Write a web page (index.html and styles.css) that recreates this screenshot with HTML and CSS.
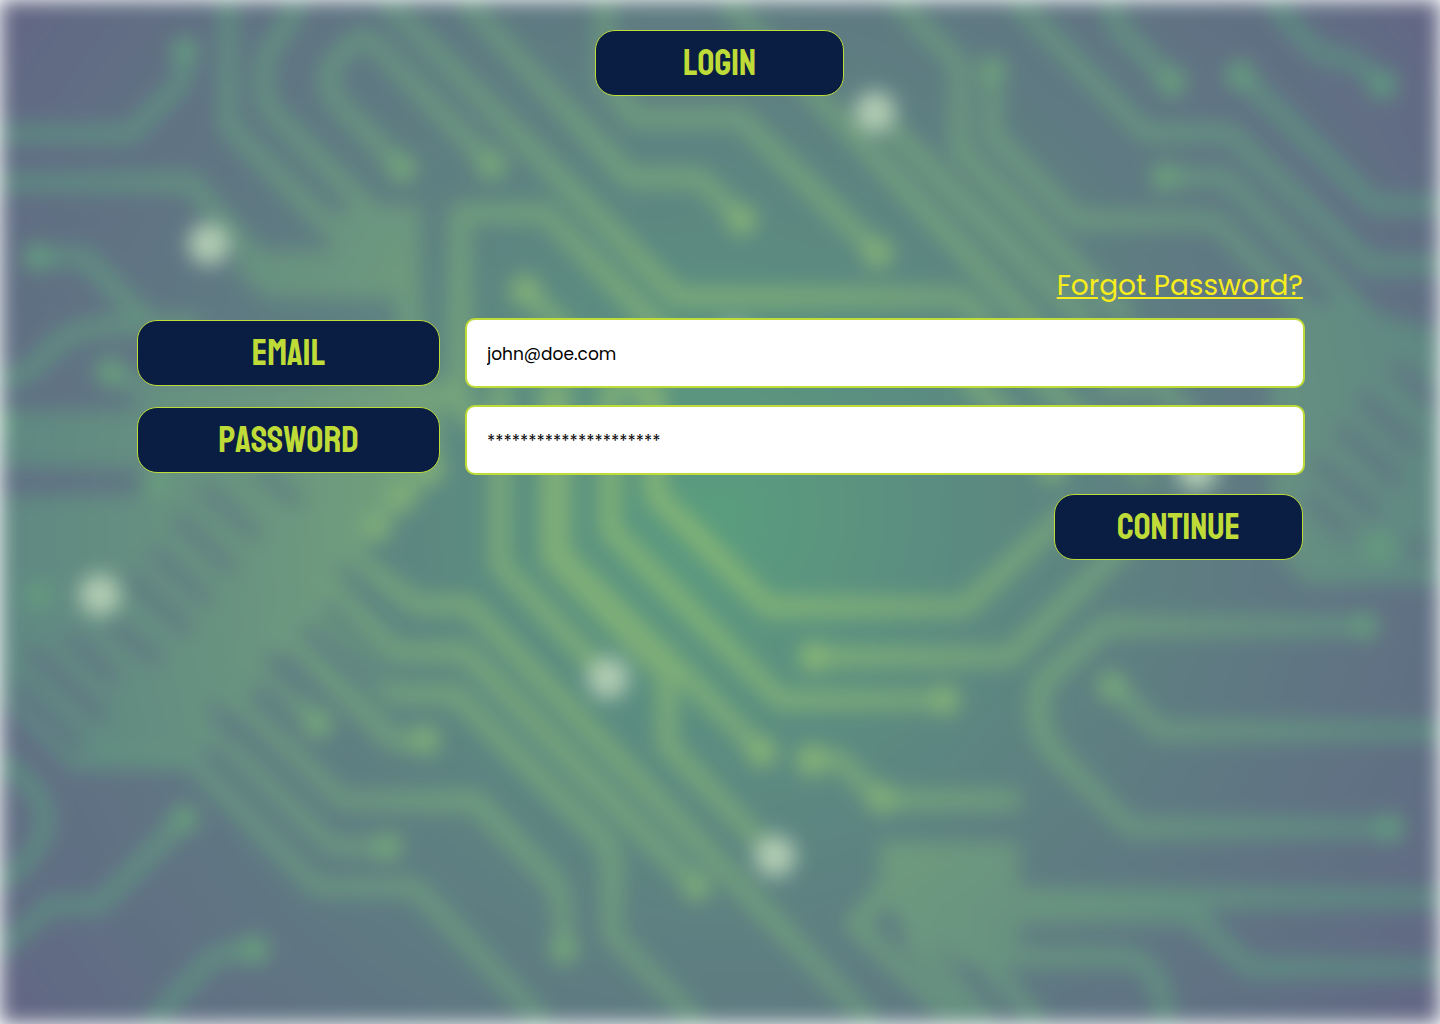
FILE: index.html
```html
<!DOCTYPE html>
<html lang="en">
<head>
<meta charset="utf-8">
<meta name="viewport" content="width=device-width, initial-scale=1">
<title>Login</title>
<link rel="stylesheet" href="styles.css">
</head>
<body>
<svg class="circuit" viewBox="0 0 1440 1024" preserveAspectRatio="none" aria-hidden="true">
  <defs>
    <radialGradient id="board" gradientUnits="userSpaceOnUse" cx="720" cy="512" r="900">
      <stop offset="0" stop-color="#5a9d7e"/>
      <stop offset=".25" stop-color="#5b8c80"/>
      <stop offset=".5" stop-color="#5e7e81"/>
      <stop offset=".75" stop-color="#607283"/>
      <stop offset=".9" stop-color="#616b84"/>
      <stop offset="1" stop-color="#646485"/>
    </radialGradient>
    <radialGradient id="trace" gradientUnits="userSpaceOnUse" cx="720" cy="512" r="900">
      <stop offset="0" stop-color="#88b874"/>
      <stop offset=".25" stop-color="#7aaa79"/>
      <stop offset=".5" stop-color="#6c987f"/>
      <stop offset=".8" stop-color="#5f8b82"/>
      <stop offset="1" stop-color="#5c8382"/>
    </radialGradient>
    <radialGradient id="pad" gradientUnits="userSpaceOnUse" cx="720" cy="512" r="900">
      <stop offset="0" stop-color="#90be72"/>
      <stop offset=".35" stop-color="#82b078"/>
      <stop offset=".6" stop-color="#6da37c"/>
      <stop offset="1" stop-color="#5a9582"/>
    </radialGradient>
  </defs>
  <rect width="1440" height="1024" fill="url(#board)"/>
  <!-- solid copper areas -->
  <g class="areas" fill="url(#trace)">
    <path d="M350 205H420V400H398V298H265L232 268L250 250H335L325 225Z"/>
    <path d="M0 410H130L160 385H440V475L365 545L350 575L190 770H70L0 700V495H140V468H0Z"/>
    <path d="M880 842H1020V888H1200L1215 925H1020V965H960L905 930L880 890Z"/>
    <path d="M1330 300L1440 330V585H1305L1270 545V340Z"/>
  </g>
  <!-- traces -->
  <g class="traces" stroke="url(#trace)">
    <path d="M0 134H130L178 86Q185 78 185 50"/>
    <path d="M0 182H190L255 258"/>
    <path d="M228 0V125L340 237"/>
    <path d="M298 0Q290 25 268 50Q258 90 270 110L370 210"/>
    <path d="M402 168L335 100Q322 80 335 60L356 40Q365 34 375 44L492 165"/>
    <path d="M385 0L677 297H960L990 325"/>
    <path d="M463 0L630 178H700L742 220"/>
    <path d="M605 0V80L635 118H740L878 253"/>
    <path d="M725 0L1040 330"/>
    <path d="M875 113L1090 325"/>
    <path d="M895 0L960 65V150L1130 320"/>
    <path d="M992 70V135L1077 220H1215L1320 325"/>
    <path d="M1015 0L1145 133H1230L1370 265H1440"/>
    <path d="M1112 0Q1112 20 1125 35L1172 82"/>
    <path d="M1270 0L1310 45Q1320 57 1345 58Q1355 60 1383 85"/>
    <path d="M1240 75L1375 205H1440"/>
    <path d="M1165 177H1225L1370 320"/>
    <path d="M460 400V213H545L700 370"/>
    <path d="M525 290L570 335"/>
    <path d="M37 257H85L150 325"/>
    <path d="M0 380Q25 380 50 350Q70 325 130 325H200"/>
    <path d="M110 372L150 390H440L500 440"/>
    <path d="M350 555L417 605H470L873 1024"/>
    <path d="M320 575L395 652H465L697 887"/>
    <path d="M300 605L393 694H455L602 838Q612 850 612 870V935L700 1024"/>
    <path d="M270 620L393 740H425"/>
    <path d="M240 645L318 724"/>
    <path d="M225 690L343 801H475L553 880Q564 892 564 950"/>
    <path d="M190 710L333 847H388"/>
    <path d="M70 755H187L317 887H415L545 1024"/>
    <path d="M0 760Q45 790 45 820Q45 850 0 885"/>
    <path d="M0 950L50 905H100L185 818"/>
    <path d="M150 1024L205 965Q218 951 255 950"/>
    <path d="M500 380V565L600 670"/>
    <path d="M555 380V555L665 665" stroke-width="32"/>
    <path d="M650 640L762 752"/>
    <path d="M610 380V530L780 700H945"/>
    <path d="M655 380V495L768 607H965L1070 510"/>
    <path d="M812 657H1010L1130 540"/>
    <path d="M667 670V745L775 857"/>
    <path d="M810 760H840L880 800H1020"/>
    <path d="M890 885L855 925L960 1024"/>
    <path d="M915 900V945L990 1024"/>
    <path d="M950 920L1040 1024"/>
    <path d="M1010 957H1130Q1165 970 1165 1024"/>
    <path d="M1020 898H1440"/>
    <path d="M1190 915L1250 968H1440"/>
    <path d="M1440 731H1160L1112 685"/>
    <path d="M1390 828H1130L1052 750Q1028 715 1045 680L1105 626H1365"/>
    <path d="M620 370L660 415"/>
    <path d="M960 370L1050 460M1030 370L1150 480M1100 385H1160L1200 430"/>
  </g>
  <!-- gaps between the tightly packed lines -->
  <g class="gaps" stroke="url(#board)">
    <path d="M265 475L295 500M208 492L254 534M182 522L230 568M158 555L205 598M133 580L185 628M116 628L155 658M74 640L112 678M35 655L100 715M20 690L76 745M345 570L380 600M310 630L380 680M270 660L300 690M215 710L230 730"/>
    <path d="M1400 370L1430 400M1365 400L1412 445M1343 432L1395 478M1318 464L1372 510M1310 500L1345 532M1415 548L1425 552"/>
  </g>
  <g fill="url(#pad)">
    <circle cx="185" cy="50" r="13"/><circle cx="402" cy="168" r="14"/><circle cx="492" cy="165" r="14"/>
    <circle cx="742" cy="220" r="15"/><circle cx="878" cy="253" r="15"/><circle cx="992" cy="70" r="13"/>
    <circle cx="1172" cy="82" r="14"/><circle cx="1240" cy="75" r="14"/><circle cx="1383" cy="85" r="14"/>
    <circle cx="1165" cy="177" r="14"/><circle cx="525" cy="290" r="15"/><circle cx="37" cy="257" r="14"/>
    <circle cx="110" cy="372" r="14"/><circle cx="0" cy="422" r="14"/><circle cx="158" cy="484" r="11"/>
    <circle cx="402" cy="498" r="14"/><circle cx="377" cy="528" r="14"/><circle cx="430" cy="470" r="14"/>
    <circle cx="38" cy="595" r="13"/><circle cx="425" cy="740" r="15"/><circle cx="318" cy="724" r="14"/>
    <circle cx="388" cy="847" r="14"/><circle cx="564" cy="950" r="14"/><circle cx="697" cy="887" r="14"/>
    <circle cx="185" cy="818" r="13"/><circle cx="255" cy="950" r="14"/><circle cx="762" cy="752" r="15"/>
    <circle cx="945" cy="700" r="15"/><circle cx="814" cy="657" r="15"/><circle cx="812" cy="760" r="16"/>
    <circle cx="882" cy="799" r="15"/><circle cx="1112" cy="686" r="14"/><circle cx="1365" cy="626" r="13"/>
    <circle cx="1390" cy="828" r="14"/><circle cx="1380" cy="548" r="13"/><circle cx="1052" cy="468" r="14"/>
  </g>
  <g class="lights">
    <circle cx="875" cy="112" r="21"/><circle cx="209" cy="244" r="21"/><circle cx="100" cy="595" r="21"/>
    <circle cx="608" cy="678" r="21"/><circle cx="775" cy="856" r="21"/><circle cx="1197" cy="470" r="21"/>
    <circle cx="735" cy="342" r="18"/>
  </g>
</svg>

<main class="page">
  <h1 class="plate title">LOGIN</h1>
  <form class="form">
    <a class="forgot" href="#forgot">Forgot Password?</a>
    <label class="plate" for="email">EMAIL</label>
    <input class="field" id="email" type="text" value="john@doe.com">
    <label class="plate" for="password">PASSWORD</label>
    <input class="field" id="password" type="text" value="*********************" autocomplete="off">
    <button class="plate submit" type="button">CONTINUE</button>
  </form>
</main>
</body>
</html>
```
FILE: styles.css
```css
* {
  box-sizing: border-box;
}

body {
  margin: 0;
  min-height: 100vh;
  background: #fff;
  font-family: "Poppins", "Inter", sans-serif;
}

.circuit {
  position: absolute;
  inset: 0;
  z-index: -1;
  width: 100%;
  height: 100%;
  filter: blur(10px);
}

.areas {
  opacity: 0.9;
}

.traces {
  fill: none;
  stroke-width: 20;
  stroke-linejoin: round;
}

.gaps {
  fill: none;
  stroke-width: 15;
  stroke-linecap: round;
  opacity: 0.9;
}

.lights {
  fill: #b0cbb2;
}

.page {
  display: flex;
  flex-direction: column;
  gap: 175px;
  padding: 30px 135px 30px 137px;
}

.plate {
  display: flex;
  align-items: center;
  justify-content: center;
  height: 66px;
  margin: 0;
  padding: 0;
  border: 1px solid #bfdb38;
  border-radius: 20px;
  background: #091e42;
  color: #bfdb38;
  font: 37px/44px "Staatliches", "Bebas Neue", "Liberation Sans Narrow", sans-serif;
  font-kerning: none;
}

.title {
  align-self: center;
  width: 249px;
  margin-right: 3px;
}

.form {
  display: grid;
  grid-template-columns: 303px 1fr;
  align-items: center;
  column-gap: 25px;
  row-gap: 17px;
}

.forgot {
  grid-column: 1 / -1;
  justify-self: end;
  margin-right: 2px;
  color: #f8ed1c;
  font-size: 28px;
  line-height: 30px;
}

.field {
  width: 100%;
  height: 70px;
  padding: 2px 20px 0;
  border: 2px solid #bfdb38;
  border-radius: 10px;
  background: #fff;
  color: #000;
  font-family: inherit;
  font-size: 17px;
}

.submit {
  grid-column: 1 / -1;
  justify-self: end;
  width: 249px;
  margin: 2px 2px 0 0;
}
```
